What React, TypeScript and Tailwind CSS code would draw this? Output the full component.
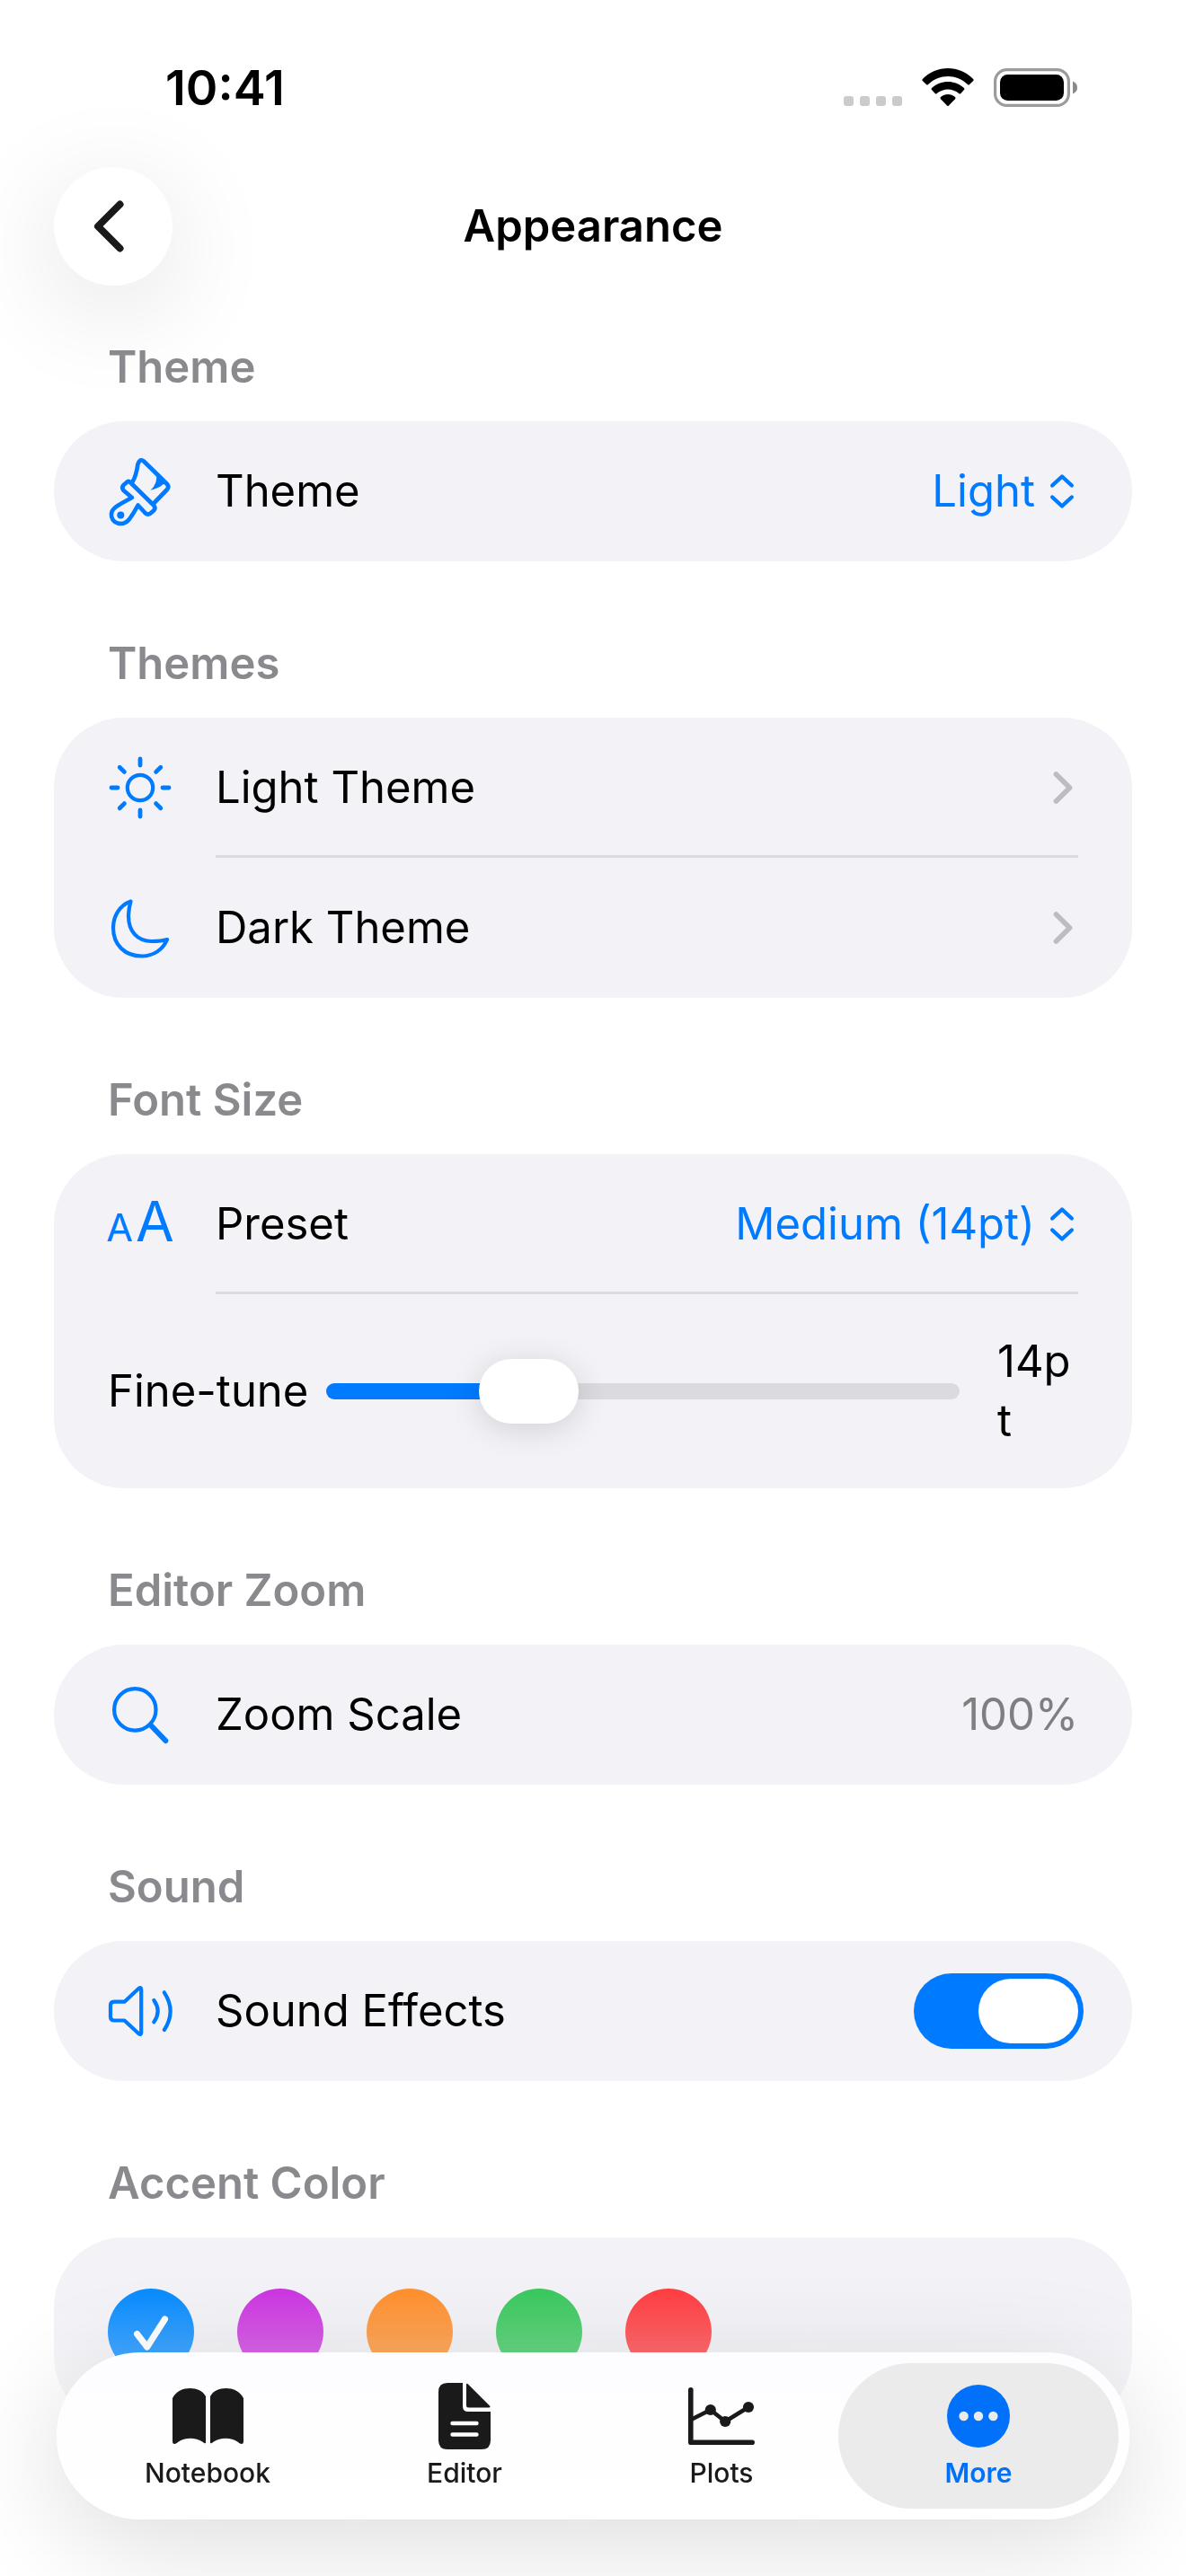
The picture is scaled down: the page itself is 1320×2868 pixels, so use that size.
import { useState, type ReactNode } from 'react'
import clsx from 'clsx'

const ACCENTS = [
  { name: 'Blue', bg: 'bg-[#0088ff]' },
  { name: 'Purple', bg: 'bg-[#cb30e0]' },
  { name: 'Orange', bg: 'bg-[#ff8d28]' },
  { name: 'Green', bg: 'bg-[#34c759]' },
  { name: 'Red', bg: 'bg-[#ff383c]' },
]

const PRESETS = ['Small (12pt)', 'Medium (14pt)', 'Large (16pt)']
const MIN_PT = 10
const MAX_PT = 24

/* ---------- icons ---------- */

function RowIcon({ children }: { children: ReactNode }) {
  return (
    <svg viewBox="0 0 72 76" className="w-[72px] h-[76px] shrink-0 overflow-visible text-[#007aff]" fill="none"
      stroke="currentColor" strokeWidth="4.2" strokeLinecap="round" strokeLinejoin="round" aria-hidden="true">
      {children}
    </svg>
  )
}

const BrushIcon = () => (
  <RowIcon>
    <g strokeWidth="4.7">
      <path d="M25 28 L51.5 54 Q53.5 57 51 59.5 L47.5 62.5 Q44.5 65 41.5 62 L33.6 53.5 Q29 62 24 69 C17 78 3 74 4 63 C4.5 57 10 54 26.9 45 L17.5 37 Q15 34 17.5 31 L20.5 28.5 Q23 26 25 28 Z" />
      <path d="M27.7 27 Q31.5 21 33.5 7.5 Q36 1 40 4.5 L66 30 Q68.5 33 66 36 L51 51.5" />
    </g>
    <path d="M54 18 Q56 29 47.5 36.8 Q57 34.5 61 30.5 L66 29 Z" fill="currentColor" stroke="none" />
    <circle cx="14.3" cy="64.5" r="4" fill="currentColor" stroke="none" />
  </RowIcon>
)

const SunIcon = () => (
  <RowIcon>
    <circle cx="36" cy="38" r="14.2" />
    <path strokeWidth="4.8" d="M36 6 V13 M36 63 V70 M4 38 H11 M61 38 H68 M13.2 15.2 L18.4 20.4 M53.6 55.6 L58.8 60.8 M13.2 60.8 L18.4 55.6 M53.6 20.4 L58.8 15.2" />
  </RowIcon>
)

const MoonIcon = () => (
  <RowIcon>
    <path d="M25.5 8.5 C13 13 6 25 6 38 C6 57 19 69.5 38 69.5 C51 69.5 61.5 62 66 51 C60 52.8 55 53 49 53 C33 53 23 42 23 25 C23 19 24 14 25.5 8.5 Z" />
  </RowIcon>
)

const SearchIcon = () => (
  <RowIcon>
    <circle cx="30.3" cy="32.4" r="23.2" />
    <path strokeWidth="6" d="M48 50 L64.3 67" />
  </RowIcon>
)

const SpeakerIcon = () => (
  <RowIcon>
    <path d="M7 27.7 H18.5 L34.5 12.7 Q37.2 11 37.2 14 V62 Q37.2 65 34.5 63.3 L18.5 48.5 H7 Q3 48.5 3 44.5 V31.7 Q3 27.7 7 27.7 Z" />
    <path d="M51.3 26 Q60 38 51.3 50.2 M62.8 17.3 Q76.5 38 62.8 59" />
  </RowIcon>
)

const SizeIcon = () => (
  <span aria-hidden="true" className="flex w-[72px] shrink-0 items-baseline justify-center gap-[3px] text-[#007aff]">
    <span className="text-[43px] leading-[66px]">A</span>
    <span className="text-[62px] leading-[66px]">A</span>
  </span>
)

const UpDownIcon = () => (
  <svg viewBox="0 0 28 40" className="w-7 h-10 shrink-0 mr-1 text-[#007aff] pointer-events-none" fill="none"
    stroke="currentColor" strokeWidth="4.4" strokeLinecap="round" strokeLinejoin="round" aria-hidden="true">
    <path d="M3.2 13.5 L14 3.5 L24.8 13.5 M3.2 26.5 L14 36.5 L24.8 26.5" />
  </svg>
)

const ChevronIcon = () => (
  <svg viewBox="0 0 22 38" className="w-[22px] h-[38px] shrink-0 mr-[6px]" fill="none" stroke="#bcbcc1"
    strokeWidth="5.6" strokeLinecap="round" strokeLinejoin="round" aria-hidden="true">
    <path d="M3.4 4 L18.6 19 L3.4 34" />
  </svg>
)

const NotebookIcon = () => (
  <svg viewBox="0 0 79 62" className="w-[79px] h-[62px]" fill="currentColor" aria-hidden="true">
    <path d="M0 11 C4 3 12 0 19.5 0 C27 0 34 3 37 9 V60 Q37 62 35.3 61 C26 54 13 54 4 61.5 Q0 63 0 59 Z" />
    <path d="M79 11 C75 3 67 0 59.5 0 C52 0 45 3 42 9 V60 Q42 62 43.7 61 C53 54 66 54 75 61.5 Q79 63 79 59 Z" />
  </svg>
)

const EditorIcon = () => (
  <svg viewBox="0 0 58 74" className="w-[58px] h-[74px]" fill="currentColor" aria-hidden="true">
    <path d="M10 0 H27 V26 Q27 32 33 32 H58 V64 Q58 74 48 74 H10 Q0 74 0 64 V10 Q0 0 10 0 Z" />
    <path d="M31 2 Q31 0 33 1.5 L57 25.5 Q58.5 27.5 56 27.5 H33.5 Q31 27.5 31 25 Z" />
    <path d="M15.5 45 H42.5 M15.5 57.5 H42.5" stroke="#fcfcfe" strokeWidth="4.4" strokeLinecap="round" />
  </svg>
)

const PlotsIcon = () => (
  <svg viewBox="0 0 74 64" className="w-[74px] h-[64px]" fill="none" stroke="currentColor" strokeLinecap="round"
    strokeLinejoin="round" aria-hidden="true">
    <path strokeWidth="5.6" d="M2.8 2.8 V61.2 H71.2" />
    <path strokeWidth="4.6" d="M3 36 L24.8 25 L41.2 38 L67 22" />
    <g fill="currentColor" stroke="none">
      <circle cx="24.8" cy="25" r="6.1" />
      <circle cx="41.2" cy="38" r="6.1" />
      <circle cx="67" cy="22" r="6.1" />
    </g>
  </svg>
)

const MoreIcon = () => (
  <svg viewBox="0 0 70 70" className="w-[70px] h-[70px]" aria-hidden="true">
    <circle cx="35" cy="35" r="35" fill="currentColor" />
    <g fill="#ebebec">
      <circle cx="18.6" cy="35" r="5.2" />
      <circle cx="35" cy="35" r="5.2" />
      <circle cx="51.4" cy="35" r="5.2" />
    </g>
  </svg>
)

/* ---------- layout pieces ---------- */

function StatusBar() {
  return (
    <div className="flex h-[186px] items-start justify-between pt-[65px] pl-[184px] pr-[120px]">
      <span className="text-[54px] leading-[66px] font-semibold">10:41</span>
      <div className="flex h-[64px] items-center gap-[22px]">
        <div className="flex gap-[7px] pt-[30px]">
          {[0, 1, 2, 3].map(i => <span key={i} className="size-[11px] rounded-[3px] bg-[#cbcbcb]" />)}
        </div>
        <svg viewBox="0 0 58 42" className="w-[58px] h-[42px]" aria-label="Wi-Fi">
          <path d="M0.8 12 C16 -4 42 -4 57.2 12 Q58 13 57.2 14 L53 18 Q52 19 51 18 C38.5 6 19.5 6 7 18 Q6 19 5 18 L0.8 14 Q0 13 0.8 12 Z" />
          <path d="M11 22 C21 12.5 37 12.5 47 22 Q48 23 47 24 L43.3 28 Q42.3 29 41.3 28 C34 22 24 22 16.7 28 Q15.7 29 14.7 28 L11 24 Q10 23 11 22 Z" />
          <path d="M21 32 C25.5 28 32.5 28 37 32 Q38 33 37 34.2 L30 41.4 Q29 42.4 28 41.4 L21 34.2 Q20 33 21 32 Z" />
        </svg>
        <svg viewBox="0 0 94 43" className="w-[94px] h-[43px]" aria-label="Battery">
          <rect x="1.6" y="1.6" width="81.8" height="39.8" rx="13" fill="none" stroke="#9b9b9b" strokeWidth="3.2" />
          <rect x="7" y="7" width="71" height="29" rx="8.5" />
          <path d="M88 14.5 Q93 16.5 93 21.5 Q93 26.5 88 28.5 Z" fill="#8a8a8a" />
        </svg>
      </div>
    </div>
  )
}

function Section({ title, children }: { title: string; children: ReactNode }) {
  return (
    <section>
      <h2 className="px-[60px] pb-[27px] font-semibold text-[#8a8a8e]">{title}</h2>
      <div className="rounded-[78px] bg-[#f2f2f7]">{children}</div>
    </section>
  )
}

interface RowProps { icon: ReactNode; label: ReactNode; divider?: boolean; children?: ReactNode }

function Row({ icon, label, divider, children }: RowProps) {
  return (
    <div className="flex h-[156px] items-center gap-12 px-[60px] text-left">
      {icon}
      <div className={clsx('flex h-full min-w-0 flex-1 items-center justify-between', divider && 'border-b-[3px] border-[#dcdce0] pt-[3px]')}>
        {label}
        {children}
      </div>
    </div>
  )
}

interface PickerProps { id: string; value: string; options: string[]; onChange: (v: string) => void }

function Picker({ id, value, options, onChange }: PickerProps) {
  return (
    <span className="flex items-center gap-4">
      <select id={id} value={value} onChange={e => onChange(e.target.value)}
        className="field-sizing-content appearance-none bg-transparent leading-[66px] text-[#007aff] outline-none">
        {options.map(o => <option key={o}>{o}</option>)}
      </select>
      <UpDownIcon />
    </span>
  )
}

const TABS = [
  { name: 'Notebook', icon: <NotebookIcon /> },
  { name: 'Editor', icon: <EditorIcon /> },
  { name: 'Plots', icon: <PlotsIcon /> },
  { name: 'More', icon: <MoreIcon /> },
]

function TabBar() {
  const [active, setActive] = useState('More')
  return (
    <nav className="fixed inset-x-[63px] bottom-[63px] flex rounded-full bg-linear-to-b from-[#fdfdff] to-white px-[25px] py-3 shadow-[0_24px_120px_rgba(0,0,0,0.14)]">
      {TABS.map(tab => (
        <button key={tab.name} onClick={() => setActive(tab.name)}
          className={clsx('-mx-[13px] flex h-[162px] flex-1 flex-col items-center justify-center gap-2 rounded-full',
            active === tab.name ? 'bg-[#ebebec] text-[#0071f8]' : 'text-[#1a1a1b]')}>
          <span className="flex h-[74px] items-center">{tab.icon}</span>
          <span className={clsx('text-[30px] leading-9', active === tab.name ? 'font-semibold' : 'font-medium')}>{tab.name}</span>
        </button>
      ))}
    </nav>
  )
}

export default function App() {
  const [theme, setTheme]   = useState('Light')
  const [preset, setPreset] = useState('Medium (14pt)')
  const [size, setSize]     = useState(14)
  const [sound, setSound]   = useState(true)
  const [accent, setAccent] = useState('Blue')

  const filled = ((size - MIN_PT) / (MAX_PT - MIN_PT)) * 100

  return (
    <div className="min-h-screen bg-white pb-[168px] font-['Inter','Liberation_Sans',sans-serif] text-[49px] leading-[66px] text-black">
      <StatusBar />
      <header className="grid grid-cols-[132px_1fr_132px] items-center px-[60px]">
        <button aria-label="Back" className="flex size-[132px] items-center justify-center rounded-full bg-white shadow-[0_24px_120px_rgba(0,0,0,0.12)]">
          <svg viewBox="0 0 34 58" className="mr-[10px] w-[34px] h-[58px]" fill="none" stroke="#1a1a1a" strokeWidth="8"
            strokeLinecap="round" strokeLinejoin="round" aria-hidden="true">
            <path d="M29.5 4.5 L5 29 L29.5 53.5" />
          </svg>
        </button>
        <h1 className="text-center font-semibold">Appearance</h1>
      </header>

      <main className="flex flex-col gap-[81px] px-[60px] pt-[58px]">
        <Section title="Theme">
          <Row icon={<BrushIcon />} label={<label htmlFor="theme">Theme</label>}>
            <Picker id="theme" value={theme} options={['System', 'Light', 'Dark']} onChange={setTheme} />
          </Row>
        </Section>

        <Section title="Themes">
          <button className="block w-full">
            <Row icon={<SunIcon />} label={<span>Light Theme</span>} divider><ChevronIcon /></Row>
          </button>
          <button className="block w-full">
            <Row icon={<MoonIcon />} label={<span>Dark Theme</span>}><ChevronIcon /></Row>
          </button>
        </Section>

        <Section title="Font Size">
          <Row icon={<SizeIcon />} label={<label htmlFor="preset">Preset</label>} divider>
            <Picker id="preset" value={preset} options={PRESETS} onChange={setPreset} />
          </Row>
          <div className="flex items-center px-[60px] py-[42px]">
            <label htmlFor="fine-tune" className="mr-5 shrink-0">Fine-tune</label>
            <input id="fine-tune" type="range" min={MIN_PT} max={MAX_PT} value={size} onChange={e => setSize(Number(e.target.value))}
              className="h-[18px] min-w-0 flex-1 appearance-none rounded-full outline-none [&::-webkit-slider-thumb]:h-[72px] [&::-webkit-slider-thumb]:w-[111px] [&::-webkit-slider-thumb]:appearance-none [&::-webkit-slider-thumb]:rounded-full [&::-webkit-slider-thumb]:bg-white [&::-webkit-slider-thumb]:shadow-[0_6px_36px_rgba(0,0,0,0.14)]"
              style={{ background: `linear-gradient(to right, #007aff ${filled}%, #dadadf ${filled}%)` }} />
            <output htmlFor="fine-tune" className="ml-[42px] w-[90px] shrink-0 break-all">{`${size}pt`}</output>
          </div>
        </Section>

        <Section title="Editor Zoom">
          <Row icon={<SearchIcon />} label={<span>Zoom Scale</span>}>
            <span className="text-[#7f7f82]">100%</span>
          </Row>
        </Section>

        <Section title="Sound">
          <Row icon={<SpeakerIcon />} label={<label htmlFor="sound">Sound Effects</label>}>
            <input id="sound" type="checkbox" role="switch" checked={sound} onChange={e => setSound(e.target.checked)}
              className="-mr-[6px] flex h-[84px] w-[189px] appearance-none items-center rounded-full bg-[#dadadf] p-[6px] before:h-[72px] before:w-[111px] before:rounded-full before:bg-white before:content-[''] checked:justify-end checked:bg-[#007aff]" />
          </Row>
        </Section>

        <Section title="Accent Color">
          <div role="radiogroup" aria-label="Accent Color" className="flex gap-12 px-[60px] py-[57px]">
            {ACCENTS.map(a => (
              <label key={a.name} className={clsx('flex size-24 rounded-full', a.bg)}>
                <input type="radio" name="accent" aria-label={a.name} checked={accent === a.name} onChange={() => setAccent(a.name)} className="sr-only" />
                {accent === a.name && (
                  <svg viewBox="0 0 96 96" className="size-24" fill="none" stroke="white" strokeWidth="7" strokeLinecap="round" strokeLinejoin="round" aria-hidden="true">
                    <path d="M32.5 50.5 L43.7 65 L63.5 34" />
                  </svg>
                )}
              </label>
            ))}
          </div>
        </Section>
      </main>

      {/* content fades out under the tab bar */}
      <div className="pointer-events-none fixed inset-x-0 bottom-0 h-[330px] bg-linear-to-b from-white/0 to-white" />
      <TabBar />
    </div>
  )
}
